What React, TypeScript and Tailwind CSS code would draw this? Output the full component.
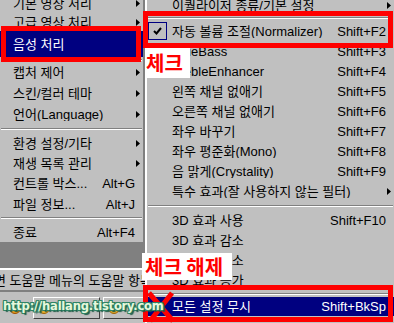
import React from 'react';

type Item =
  | { sep: true; h: number }
  | { sep?: false; t: string; h: number; sc?: string; arrow?: boolean; active?: boolean; checked?: boolean };

const leftItems: Item[] = [
  { t: '기본 영상 처리', h: 20, arrow: true },
  { t: '고급 영상 처리', h: 18, arrow: true },
  { t: '음성 처리', h: 26, arrow: true, active: true },
  { sep: true, h: 5 },
  { t: '캡처 제어', h: 21, arrow: true },
  { t: '스킨/컬러 테마', h: 21, arrow: true },
  { t: '언어(Language)', h: 21, arrow: true },
  { sep: true, h: 8 },
  { t: '환경 설정/기타', h: 20, arrow: true },
  { t: '재생 목록 관리', h: 20, arrow: true },
  { t: '컨트롤 박스...', h: 21, sc: 'Alt+G' },
  { t: '파일 정보...', h: 20, sc: 'Alt+J' },
  { sep: true, h: 8 },
  { t: '종료', h: 20, sc: 'Alt+F4' },
];

const subItems: Item[] = [
  { t: '이퀄라이저 종류/기본 설정', h: 20, arrow: true },
  { sep: true, h: 6 },
  { t: '자동 볼륨 조절(Normalizer)', h: 20, sc: 'Shift+F2', checked: true },
  { t: 'TrueBass', h: 20, sc: 'Shift+F3' },
  { t: 'TrebleEnhancer', h: 20, sc: 'Shift+F4' },
  { t: '왼쪽 채널 없애기', h: 20, sc: 'Shift+F5' },
  { t: '오른쪽 채널 없애기', h: 20, sc: 'Shift+F6' },
  { t: '좌우 바꾸기', h: 20, sc: 'Shift+F7' },
  { t: '좌우 평준화(Mono)', h: 20, sc: 'Shift+F8' },
  { t: '음 맑게(Crystality)', h: 20, sc: 'Shift+F9' },
  { t: '특수 효과(잘 사용하지 않는 필터)', h: 20, arrow: true },
  { sep: true, h: 9 },
  { t: '3D 효과 사용', h: 20, sc: 'Shift+F10' },
  { t: '3D 효과 감소', h: 20 },
  { t: '3D 효과 최소', h: 20 },
  { t: '3D 효과 증가', h: 20 },
  { sep: true, h: 7 },
  { t: '모든 설정 무시', h: 19, sc: 'Shift+BkSp', active: true },
];

function Arrow({ white }: { white?: boolean }) {
  return (
    <svg width="4" height="7" viewBox="0 0 4 7">
      <polygon points="0,0 4,3.5 0,7" fill={white ? '#ffffff' : '#000000'} />
    </svg>
  );
}

function Sep({ h }: { h: number }) {
  return (
    <div className="flex items-center px-[1px]" style={{ height: h }}>
      <div className="w-full h-[2px] border-t border-[#808080] border-b border-b-white" />
    </div>
  );
}

function Check() {
  return (
    <div className="ml-[1px] w-[19px] h-[18px] border border-[#000080] flex items-center justify-center">
      <svg width="9" height="8" viewBox="0 0 9 8">
        <path d="M1 4 L3.5 6.5 L8 1" stroke="#000" strokeWidth="2" fill="none" />
      </svg>
    </div>
  );
}

function Row({ item, sub }: { item: Item; sub?: boolean }) {
  if (item.sep) return <Sep h={item.h} />;
  return (
    <div
      className={`flex items-center pr-[3px] ${sub ? '' : 'pl-[13px]'} ${item.active ? 'bg-[#000080] text-white' : 'text-black'}`}
      style={{ height: item.h }}
    >
      {sub && <div className="w-[25px] shrink-0">{item.checked && <Check />}</div>}
      <span className="flex-1 whitespace-nowrap overflow-hidden">{item.t}</span>
      {item.sc && <span className="whitespace-nowrap">{item.sc}</span>}
      <span className="w-[4px] ml-[1px] flex items-center">{item.arrow && <Arrow white={item.active} />}</span>
    </div>
  );
}

export default function App() {
  return (
    <div className="relative w-[394px] h-[323px] overflow-hidden bg-[#c0c0c0] text-[13px] leading-none font-['Liberation_Sans','Noto_Sans_CJK_KR',sans-serif]">
      <div className="flex h-full">
        {/* left main menu + app window below */}
        <div className="w-[145px] shrink-0 flex flex-col">
          <div className="-mt-[7px] border-r-2 border-b-2 border-r-[#808080] border-b-[#808080]">
            {leftItems.map((it, i) => (
              <Row key={i} item={it} />
            ))}
          </div>
          <div className="h-[24px] bg-[#808080]" />
          <div className="h-[22px] border-t-2 border-white flex items-center overflow-hidden whitespace-nowrap -indent-[6px]">
            면 도움말 메뉴의 도움말 항목
          </div>
          <div className="flex-1 border-t-2 border-[#808080] flex items-start pt-[5px] gap-[3px]">
            <div className="w-[30px] h-[22px] flex items-center justify-center">
              <div className="w-[12px] h-[12px] rounded-full bg-[#e8a020] border border-[#a05000]" />
            </div>
            <div className="w-[67px] h-[22px] border border-t-white border-l-white border-r-[#404040] border-b-[#404040] flex items-center pl-[4px]">
              <div className="w-[12px] h-[12px] rounded-full bg-[#e8b030] border border-[#a06000]" />
            </div>
            <div className="flex-1 h-[22px] border border-t-white border-l-white border-r-[#404040] border-b-[#404040] flex items-center pl-[4px]">
              <div className="w-[12px] h-[12px] rounded-full bg-[#e8b030] border border-[#a06000]" />
            </div>
          </div>
        </div>

        {/* sound submenu */}
        <div className="flex-1 -mt-[5px] border-l-2 border-white">
          {subItems.map((it, i) => (
            <Row key={i} item={it} sub />
          ))}
        </div>
      </div>

      {/* annotations */}
      <div className="absolute left-[1px] top-[26px] w-[140px] h-[36px] border-[5px] border-[#ff0000]" />
      <div className="absolute left-[143px] top-[11px] w-[250px] h-[37px] border-[5px] border-[#ff0000]" />
      <div className="absolute left-[143px] top-[285px] w-[250px] h-[37px] border-[5px] border-[#ff0000]" />

      <div className="absolute left-[145px] top-[48px] w-[45px] h-[30px] bg-white flex items-center pl-[1px] text-[#ff0000] text-[20px] font-bold font-['Noto_Sans_CJK_KR',sans-serif]">
        체크
      </div>
      <div className="absolute left-[142px] top-[253px] w-[90px] h-[27px] bg-white flex items-center pl-[3px] text-[#ff0000] text-[20px] font-bold font-['Noto_Sans_CJK_KR',sans-serif] whitespace-nowrap">
        체크 해제
      </div>

      <svg className="absolute left-[146px] top-[291px]" width="30" height="32" viewBox="0 0 30 32">
        <path d="M3 2 L27 30 M26 2 L4 30" stroke="#ff0000" strokeWidth="5" fill="none" />
      </svg>

      <div className="absolute left-[3px] top-[300px] text-[12.8px] tracking-[-0.2px] font-bold text-[#e6f8dc] font-['DejaVu_Sans_Condensed','DejaVu_Sans',sans-serif] [text-shadow:1px_0_0_#2f8466,-1px_0_0_#2f8466,0_1px_0_#2f8466,0_-1px_0_#2f8466,1px_1px_0_#1d5a44,-1px_1px_0_#2f8466,1px_-1px_0_#2f8466,-1px_-1px_0_#2f8466,2px_2px_1px_#1d5a44]">
        http://hallang.tistory.com
      </div>
    </div>
  );
}
